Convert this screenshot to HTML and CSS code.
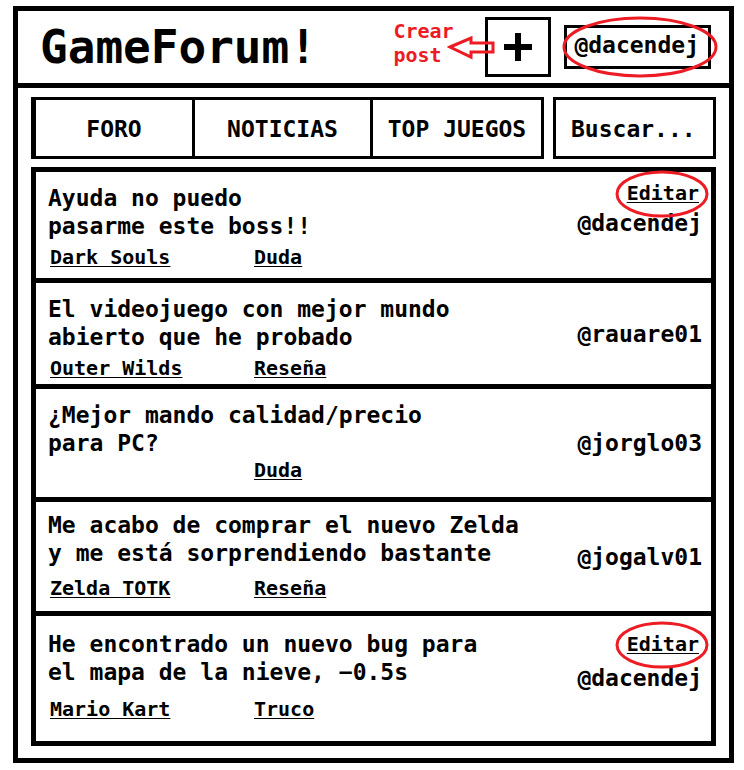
FILE: index.html
```html
<!DOCTYPE html>
<html lang="es">
<head>
<meta charset="utf-8">
<meta name="viewport" content="width=device-width, initial-scale=1">
<title>GameForum!</title>
<link rel="stylesheet" href="styles.css">
</head>
<body>
<div class="shell">
  <header class="header">
    <h1 class="brand">GameForum!</h1>
    <p class="hint">Crear<br>post</p>
    <div class="create">
      <button class="create-button" type="button" aria-label="Crear post">
        <svg width="30" height="30" viewBox="0 0 30 30" aria-hidden="true"><path d="M12 1h6v11h11v6H18v11h-6V18H1v-6h11z"/></svg>
      </button>
      <svg class="arrow" width="50" height="26" viewBox="0 0 50 26" aria-hidden="true"><path d="M3 13 24 4v5h22v9H24v5z"/></svg>
    </div>
    <div class="account">
      <button class="account-button" type="button">@dacendej</button>
      <svg class="ring ring-account" viewBox="0 0 156 62" aria-hidden="true"><ellipse cx="78" cy="31" rx="76" ry="29"/></svg>
    </div>
  </header>
  <main class="content">
    <div class="toolbar">
      <nav class="tabs">
        <a class="tab" href="#foro">FORO</a>
        <a class="tab" href="#noticias">NOTICIAS</a>
        <a class="tab" href="#top">TOP JUEGOS</a>
      </nav>
      <input class="search" type="search" placeholder="Buscar..." aria-label="Buscar">
    </div>
    <div class="posts" id="foro">
      <article class="post post-own">
        <div class="post-body">
          <h2 class="post-title">Ayuda no puedo<br>pasarme este boss!!</h2>
          <div class="tags"><a class="tag tag-game" href="#dark-souls">Dark Souls</a><a class="tag tag-kind" href="#duda">Duda</a></div>
        </div>
        <div class="post-side">
          <span class="edit"><a class="tag" href="#editar-1">Editar</a><svg class="ring ring-edit" viewBox="0 0 94 48" aria-hidden="true"><ellipse cx="47" cy="24" rx="45" ry="22"/></svg></span>
          <span class="author">@dacendej</span>
        </div>
      </article>
      <article class="post post-short">
        <div class="post-body">
          <h2 class="post-title">El videojuego con mejor mundo<br>abierto que he probado</h2>
          <div class="tags"><a class="tag tag-game" href="#outer-wilds">Outer Wilds</a><a class="tag tag-kind" href="#resena">Reseña</a></div>
        </div>
        <div class="post-side"><span class="author">@rauare01</span></div>
      </article>
      <article class="post post-question">
        <div class="post-body">
          <h2 class="post-title">¿Mejor mando calidad/precio<br>para PC?</h2>
          <div class="tags"><a class="tag tag-kind" href="#duda">Duda</a></div>
        </div>
        <div class="post-side"><span class="author">@jorglo03</span></div>
      </article>
      <article class="post post-review">
        <div class="post-body">
          <h2 class="post-title">Me acabo de comprar el nuevo Zelda<br>y me está sorprendiendo bastante</h2>
          <div class="tags"><a class="tag tag-game" href="#zelda">Zelda TOTK</a><a class="tag tag-kind" href="#resena">Reseña</a></div>
        </div>
        <div class="post-side"><span class="author">@jogalv01</span></div>
      </article>
      <article class="post post-own post-tall">
        <div class="post-body">
          <h2 class="post-title">He encontrado un nuevo bug para<br>el mapa de la nieve, −0.5s</h2>
          <div class="tags"><a class="tag tag-game" href="#mario-kart">Mario Kart</a><a class="tag tag-kind" href="#truco">Truco</a></div>
        </div>
        <div class="post-side">
          <span class="edit"><a class="tag" href="#editar-5">Editar</a><svg class="ring ring-edit" viewBox="0 0 94 48" aria-hidden="true"><ellipse cx="47" cy="24" rx="45" ry="22"/></svg></span>
          <span class="author">@dacendej</span>
        </div>
      </article>
    </div>
  </main>
</div>
</body>
</html>
```
FILE: styles.css
```css
* {
  box-sizing: border-box;
}

body {
  margin: 6px 10px 7px 13px;
  background: #fff;
  color: #000;
  font: bold 23px/28px "DejaVu Sans Mono", "Liberation Mono", monospace;
}

h1, h2, p {
  margin: 0;
  font: inherit;
}

a {
  color: inherit;
  text-decoration: none;
}

button, input {
  margin: 0;
  border: 3px solid #000;
  border-radius: 0;
  background: #fff;
  color: #000;
  font: inherit;
}

.shell {
  border: 5px solid #000;
}

/* Header */
.header {
  display: flex;
  align-items: center;
  padding: 6px 18px 6px 22px;
  border-bottom: 5px solid #000;
}

.brand {
  flex: 1;
  font-size: 46px;
  line-height: 60px;
}

.hint {
  width: 92px;
  padding-bottom: 8px;
  color: #ed1c24;
  font-size: 20px;
  line-height: 24px;
}

.create {
  position: relative;
  margin-right: 13px;
}

.create-button {
  display: grid;
  place-items: center;
  width: 66px;
  height: 60px;
  padding: 0;
}

.arrow {
  position: absolute;
  top: 17px;
  left: -38px;
  fill: none;
  stroke: #ed1c24;
  stroke-width: 3;
}

.account {
  position: relative;
}

.account-button {
  display: block;
  height: 44px;
  padding: 0 9px 4px 7px;
}

.ring {
  position: absolute;
  overflow: visible;
  fill: none;
  stroke: #ed1c24;
  stroke-width: 3;
  pointer-events: none;
}

.ring-account {
  top: -9px;
  left: -2px;
  width: 156px;
  height: 62px;
}

/* Tabs and search */
.content {
  padding: 9px 13px 12px;
}

.toolbar {
  display: grid;
  grid-template-columns: 513fr 163fr;
  gap: 9px;
  margin-bottom: 8px;
}

.tabs {
  display: grid;
  grid-template-columns: 156fr 178fr 171fr;
  border: 3px solid #000;
  border-left-width: 5px;
}

.tab {
  padding: 15px 0 13px;
  text-align: center;
}

.tab + .tab {
  border-left: 3px solid #000;
}

.search {
  width: 100%;
  min-width: 0;
  height: 62px;
  padding: 2px 0 0 15px;
  appearance: none;
}

.search::placeholder {
  color: #000;
  opacity: 1;
}

/* Posts */
.posts {
  border: 5px solid #000;
}

.post {
  display: flex;
  justify-content: space-between;
  padding: 0 9px 0 12px;
}

.post + .post {
  border-top: 5px solid #000;
}

.post-body {
  padding: 12px 0 9px;
}

.tags {
  display: grid;
  grid-template-columns: 204px auto;
  margin-top: 5px;
  padding-left: 2px;
}

.tag {
  justify-self: start;
  font-size: 20px;
  line-height: 24px;
  text-decoration: underline 1px;
  text-underline-offset: 2px;
}

.tag-kind {
  grid-column: 2;
}

.post-side {
  display: flex;
  flex-direction: column;
  justify-content: center;
  align-items: flex-end;
}

.post-own .post-side {
  justify-content: flex-start;
  gap: 4px;
  padding-top: 9px;
}

.edit {
  display: flex;
  position: relative;
  margin-right: 3px;
}

.ring-edit {
  top: -11px;
  left: -12px;
  width: 94px;
  height: 48px;
}

.post-short .post-body {
  padding-bottom: 4px;
}

.post-question .post-body {
  padding-bottom: 15px;
}

.post-question .tags {
  margin-top: 1px;
}

.post-review .post-body {
  padding: 9px 0 11px;
}

.post-review .tags {
  margin-top: 9px;
}

.post-tall .post-body {
  padding: 14px 0 20px;
}

.post-tall .tags {
  margin-top: 11px;
}

.post-tall .post-side {
  gap: 8px;
  padding-top: 16px;
}
```
